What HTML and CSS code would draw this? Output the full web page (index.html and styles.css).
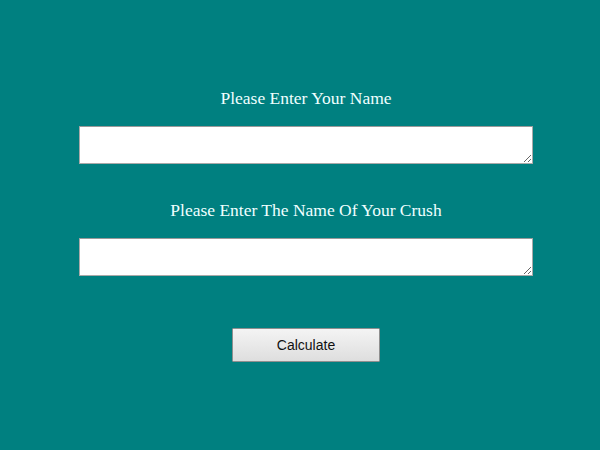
FILE: index.html
```html
<!DOCTYPE html>
<html>
<head>
<meta charset="utf-8">
<link rel="stylesheet" href="styles.css">
</head>
<body>
<main class="form">
  <label class="label" for="name">Please Enter Your Name</label>
  <textarea class="field" id="name"></textarea>
  <label class="label second" for="crush">Please Enter The Name Of Your Crush</label>
  <textarea class="field" id="crush"></textarea>
  <button class="btn" type="button">Calculate</button>
</main>
</body>
</html>
```
FILE: styles.css
```css
html, body {
  margin: 0;
  padding: 0;
  height: 100%;
  background: #008080;
}
.form {
  display: flex;
  flex-direction: column;
  align-items: center;
  padding: 89px 0 0 12px;
  font-family: "Liberation Serif", "Times New Roman", serif;
}
.label {
  color: #f0ffff;
  font-size: 17.5px;
  line-height: 18px;
  height: 20px;
}
.second {
  margin-top: 37px;
}
.field {
  box-sizing: border-box;
  width: 454px;
  height: 38px;
  margin: 17px 0 0 0;
  padding: 2px;
  border: 1px solid #a9a9a9;
  border-top-color: #999;
  background: #fff;
  resize: vertical;
  display: block;
}
.btn {
  box-sizing: border-box;
  margin-top: 52px;
  width: 148px;
  height: 34px;
  font-family: "Liberation Sans", Arial, sans-serif;
  font-size: 14px;
  color: #111;
  border: 1px solid #8f8f8f;
  border-radius: 1px;
  background: linear-gradient(#f4f4f4, #dedede);
}
```
